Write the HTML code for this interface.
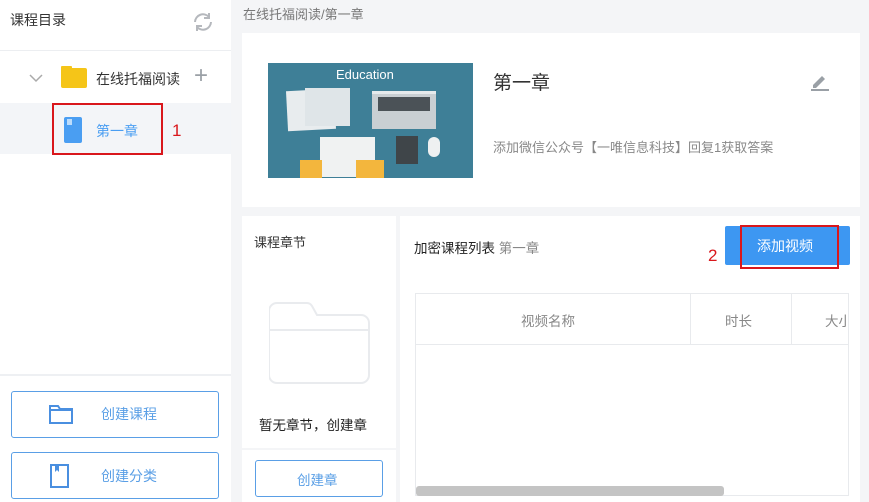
<!DOCTYPE html>
<html><head><meta charset="utf-8"><style>
*{box-sizing:border-box;margin:0;padding:0}
body{width:869px;height:502px;overflow:hidden;background:#f4f5f7;font-family:"Liberation Sans","Noto Sans CJK SC",sans-serif;position:relative;color:#333}
.a{position:absolute}
</style></head><body>
<!-- sidebar -->
<div class="a" style="left:0;top:0;width:231px;height:502px;background:#fff"></div>
<div class="a" style="left:10px;top:10px;font-size:14px;color:#333">课程目录</div>
<svg class="a" style="left:190px;top:10px" width="26" height="24" viewBox="0 0 26 24" fill="none" stroke="#b5b8bd" stroke-width="2"><path d="M5 12a8 8 0 0 1 14-5"/><path d="M21 12a8 8 0 0 1-14 5"/><path d="M19 3v5h-5"/><path d="M7 21v-5h5"/></svg>
<div class="a" style="left:0;top:50px;width:231px;height:1px;background:#eceef1"></div>
<svg class="a" style="left:29px;top:73px" width="14" height="10"><path d="M1 2l6 6 6-6" fill="none" stroke="#aaa" stroke-width="1.5"/></svg>
<div class="a" style="left:61px;top:68px;width:26px;height:20px;background:#f5c518;border-radius:2px"></div>
<div class="a" style="left:61px;top:66px;width:11px;height:4px;background:#f5c518;border-radius:1px"></div>
<div class="a" style="left:96px;top:69px;font-size:14px;color:#333;width:86px;overflow:hidden;white-space:nowrap">在线托福阅读</div>
<div class="a" style="left:194px;top:62px;font-size:24px;color:#9aa0a6;font-weight:300">+</div>
<div class="a" style="left:0;top:103px;width:231px;height:51px;background:#f3f5f8"></div>
<div class="a" style="left:52px;top:103px;width:111px;height:52px;border:2px solid #d9171c"></div>
<div class="a" style="left:64px;top:117px;width:18px;height:26px;background:#4a9ef2;border-radius:2px"></div>
<div class="a" style="left:67px;top:119px;width:5px;height:6px;background:#bcdcfb"></div>
<div class="a" style="left:96px;top:121px;font-size:14px;color:#4a9ef2">第一章</div>
<div class="a" style="left:172px;top:121px;font-size:17px;color:#d9171c">1</div>
<div class="a" style="left:0;top:374px;width:231px;height:2px;background:#eef0f3"></div>
<div class="a" style="left:11px;top:391px;width:208px;height:47px;border:1px solid #5a9fe6;border-radius:3px"></div>
<svg class="a" style="left:48px;top:403px" width="26" height="22"><path d="M2 3h8l2 3h12v14H2z M2 7h22" fill="none" stroke="#4a8fe0" stroke-width="2"/></svg>
<div class="a" style="left:101px;top:404px;font-size:14px;color:#5a9fe6">创建课程</div>
<div class="a" style="left:11px;top:452px;width:208px;height:47px;border:1px solid #5a9fe6;border-radius:3px"></div>
<svg class="a" style="left:49px;top:463px" width="22" height="26"><rect x="2" y="2" width="17" height="22" fill="none" stroke="#4a8fe0" stroke-width="2"/><path d="M6 2v7l2-2 2 2V2" fill="#4a8fe0"/></svg>
<div class="a" style="left:101px;top:466px;font-size:14px;color:#5a9fe6">创建分类</div>
<!-- breadcrumb -->
<div class="a" style="left:243px;top:4px;font-size:13px;color:#777">在线托福阅读/第一章</div>
<!-- top card -->
<div class="a" style="left:242px;top:33px;width:618px;height:174px;background:#fff"></div>
<div class="a" style="left:268px;top:63px;width:205px;height:115px;background:#3e7f97"></div>
<div class="a" style="left:336px;top:67px;font-size:13px;color:#fff">Education</div>
<div class="a" style="left:287px;top:90px;width:48px;height:40px;background:#e8ecee;transform:rotate(-3deg)"></div>
<div class="a" style="left:305px;top:88px;width:45px;height:38px;background:#dfe5e8"></div>
<div class="a" style="left:372px;top:91px;width:64px;height:38px;background:#c9cfd3;border-top:3px solid #e6eaec"></div>
<div class="a" style="left:378px;top:97px;width:52px;height:14px;background:#4b5257"></div>
<div class="a" style="left:320px;top:137px;width:55px;height:40px;background:#f0f2f2"></div>
<div class="a" style="left:396px;top:136px;width:22px;height:28px;background:#3f4549"></div>
<div class="a" style="left:428px;top:137px;width:12px;height:20px;background:#eef0f1;border-radius:6px"></div>
<div class="a" style="left:300px;top:160px;width:22px;height:18px;background:#f3b63d"></div>
<div class="a" style="left:356px;top:160px;width:28px;height:18px;background:#f3b63d"></div>
<div class="a" style="left:493px;top:68px;font-size:19px;color:#333">第一章</div>
<svg class="a" style="left:809px;top:70px" width="22" height="22"><path d="M4 15l9-9 3 3-9 9H4z" fill="#9aa0a6"/><path d="M2 20h18" stroke="#9aa0a6" stroke-width="2"/></svg>
<div class="a" style="left:493px;top:137px;font-size:13px;color:#888">添加微信公众号【一唯信息科技】回复1获取答案</div>
<!-- chapter card -->
<div class="a" style="left:242px;top:216px;width:154px;height:232px;background:#fff"></div>
<div class="a" style="left:254px;top:232px;font-size:13px;color:#333">课程章节</div>
<svg class="a" style="left:269px;top:302px" width="102" height="82"><path d="M8 1h30a6 6 0 0 1 5 3l5 9h44a8 8 0 0 1 8 8v52a8 8 0 0 1-8 8H8a8 8 0 0 1-8-8V9a8 8 0 0 1 8-8zM1 28h98" fill="none" stroke="#e9ebee" stroke-width="2"/></svg>
<div class="a" style="left:259px;top:414px;font-size:13.5px;color:#222">暂无章节，创建章</div>
<div class="a" style="left:242px;top:450px;width:154px;height:52px;background:#fff"></div>
<div class="a" style="left:255px;top:460px;width:128px;height:37px;border:1px solid #5a9fe6;border-radius:3px"></div>
<div class="a" style="left:297px;top:469px;font-size:13.5px;color:#5a9fe6">创建章</div>
<!-- right card -->
<div class="a" style="left:400px;top:216px;width:460px;height:286px;background:#fff"></div>
<div class="a" style="left:414px;top:237px;font-size:13.5px;color:#222">加密课程列表 <span style="color:#888">第一章</span></div>
<div class="a" style="left:725px;top:226px;width:125px;height:39px;background:#3d97f2;border-radius:2px"></div>
<div class="a" style="left:740px;top:225px;width:99px;height:44px;border:2px solid #d9171c"></div>
<div class="a" style="left:757px;top:236px;font-size:14px;color:#fff">添加视频</div>
<div class="a" style="left:708px;top:246px;font-size:17px;color:#d9171c">2</div>
<div class="a" style="left:415px;top:293px;width:434px;height:203px;border:1px solid #e8eaed"></div>
<div class="a" style="left:415px;top:344px;width:434px;height:1px;background:#e8eaed"></div>
<div class="a" style="left:690px;top:293px;width:1px;height:52px;background:#e8eaed"></div>
<div class="a" style="left:791px;top:293px;width:1px;height:52px;background:#e8eaed"></div>
<div class="a" style="left:521px;top:310px;font-size:13.5px;color:#888">视频名称</div>
<div class="a" style="left:725px;top:310px;font-size:13.5px;color:#888">时长</div>
<div class="a" style="left:825px;top:310px;font-size:13.5px;color:#888;width:23px;overflow:hidden;white-space:nowrap">大小</div>
<div class="a" style="left:416px;top:486px;width:308px;height:10px;background:#c4c4c4;border-radius:3px"></div>
</body></html>
